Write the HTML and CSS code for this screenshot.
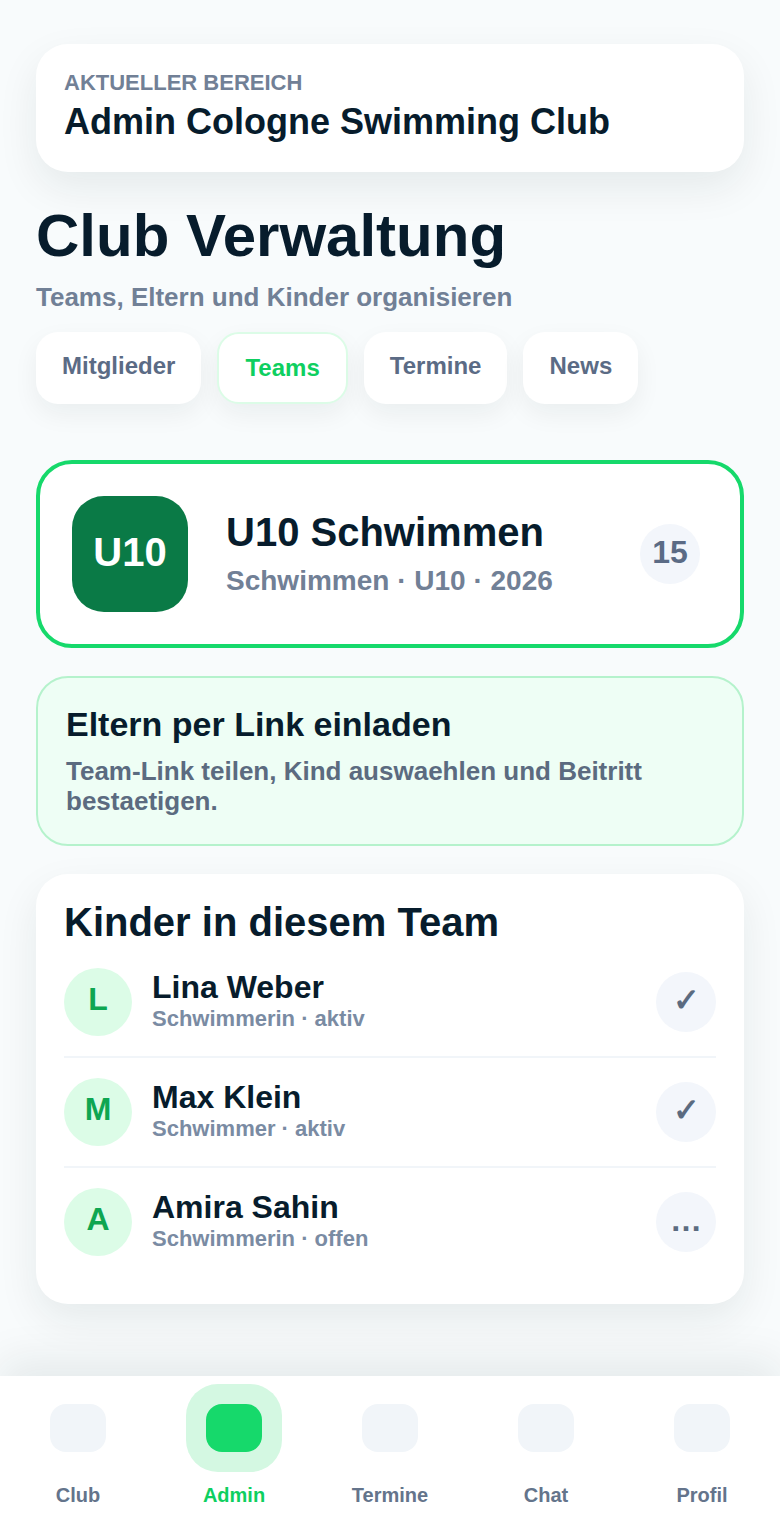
FILE: index.html
```html
<!DOCTYPE html>
<html lang="de">
<head>
    <meta charset="UTF-8">
    <meta name="viewport" content="width=device-width, initial-scale=1.0">
    <title>Club Verwaltung</title>
    <link rel="stylesheet" href="styles.css">
</head>
<body>
    <main class="content">
        <section class="area-card">
            <div class="area-label">AKTUELLER BEREICH</div>
            <div class="area-name">Admin Cologne Swimming Club</div>
        </section>

        <h1 class="page-title">Club Verwaltung</h1>
        <p class="page-sub">Teams, Eltern und Kinder organisieren</p>

        <div class="tabs">
            <a class="tab">Mitglieder</a>
            <a class="tab tab-active">Teams</a>
            <a class="tab">Termine</a>
            <a class="tab">News</a>
        </div>

        <section class="team-card">
            <div class="team-logo">U10</div>
            <div class="team-info">
                <div class="team-name">U10 Schwimmen</div>
                <div class="team-meta">Schwimmen · U10 · 2026</div>
            </div>
            <div class="team-count">15</div>
        </section>

        <section class="invite-card">
            <h2 class="invite-title">Eltern per Link einladen</h2>
            <p class="invite-text">Team-Link teilen, Kind auswaehlen und Beitritt bestaetigen.</p>
        </section>

        <section class="kids-card">
            <h2 class="kids-title">Kinder in diesem Team</h2>
            <div class="kid-row">
                <div class="kid-avatar">L</div>
                <div class="kid-info">
                    <div class="kid-name">Lina Weber</div>
                    <div class="kid-meta">Schwimmerin · aktiv</div>
                </div>
                <div class="kid-action">✓</div>
            </div>
            <div class="kid-row">
                <div class="kid-avatar">M</div>
                <div class="kid-info">
                    <div class="kid-name">Max Klein</div>
                    <div class="kid-meta">Schwimmer · aktiv</div>
                </div>
                <div class="kid-action">✓</div>
            </div>
            <div class="kid-row">
                <div class="kid-avatar">A</div>
                <div class="kid-info">
                    <div class="kid-name">Amira Sahin</div>
                    <div class="kid-meta">Schwimmerin · offen</div>
                </div>
                <div class="kid-action">…</div>
            </div>
        </section>
    </main>

    <nav class="bottom-nav">
        <a class="nav-item"><span class="nav-icon"><span class="nav-glyph"></span></span><span class="nav-label">Club</span></a>
        <a class="nav-item nav-active"><span class="nav-icon"><span class="nav-glyph"></span></span><span class="nav-label">Admin</span></a>
        <a class="nav-item"><span class="nav-icon"><span class="nav-glyph"></span></span><span class="nav-label">Termine</span></a>
        <a class="nav-item"><span class="nav-icon"><span class="nav-glyph"></span></span><span class="nav-label">Chat</span></a>
        <a class="nav-item"><span class="nav-icon"><span class="nav-glyph"></span></span><span class="nav-label">Profil</span></a>
    </nav>
</body>
</html>
```

FILE: styles.css
```css
* {
    box-sizing: border-box;
}

body {
    font-family: "Liberation Sans", Arial, sans-serif;
    font-weight: 700;
    background-color: #f8fbfc;
    color: #071c2c;
    margin: 0;
    height: 1520px;
    overflow: hidden;
    display: flex;
    flex-direction: column;
}

.content {
    flex: 1;
    padding: 44px 36px 0;
}

.area-card {
    background-color: #fff;
    border-radius: 32px;
    height: 128px;
    padding: 26px 28px;
    box-shadow: 0 16px 40px rgba(15, 35, 40, 0.08);
}

.area-label {
    font-size: 22px;
    line-height: 25px;
    color: #718096;
}

.area-name {
    font-size: 36px;
    line-height: 41px;
    margin-top: 6px;
}

.page-title {
    font-size: 60px;
    line-height: 71px;
    margin: 28px 0 0;
}

.page-sub {
    font-size: 26px;
    line-height: 30px;
    color: #718096;
    margin: 11px 0 0;
}

.tabs {
    display: flex;
    gap: 16px;
    margin-top: 20px;
}

.tab {
    font-size: 24px;
    line-height: 28px;
    padding: 20px 26.05px;
    background-color: #fff;
    color: #5b6b85;
    border-radius: 22px;
    box-shadow: 0 10px 26px rgba(15, 35, 40, 0.06);
}

.tab-active {
    border: 2px solid #dcfce7;
    color: #0ecf60;
}

.team-card {
    display: flex;
    align-items: center;
    gap: 38px;
    margin-top: 56px;
    padding: 32px 40px 32px 32px;
    background-color: #fff;
    border: 4px solid #16d96b;
    border-radius: 36px;
}

.team-logo {
    width: 116px;
    height: 116px;
    flex: none;
    display: flex;
    align-items: center;
    justify-content: center;
    padding-bottom: 4px;
    font-size: 40px;
    color: #fff;
    background-color: #0a7a46;
    border-radius: 32px;
}

.team-info {
    flex: 1;
    margin-top: -4px;
}

.team-name {
    font-size: 40px;
    line-height: 48px;
}

.team-meta {
    font-size: 28px;
    line-height: 33px;
    color: #718096;
    margin-top: 8px;
}

.team-count {
    width: 60px;
    height: 60px;
    flex: none;
    display: flex;
    align-items: center;
    justify-content: center;
    padding-bottom: 4px;
    font-size: 32px;
    color: #5b6b85;
    background-color: #f3f6fb;
    border-radius: 50%;
}

.invite-card {
    margin-top: 28px;
    padding: 27px 28px;
    height: 170px;
    background-color: #eefef5;
    border: 2px solid #b5f2cc;
    border-radius: 32px;
}

.invite-title {
    font-size: 34px;
    line-height: 39px;
    margin: 0;
}

.invite-text {
    font-size: 26px;
    line-height: 30px;
    color: #5b6b80;
    margin: 12px 0 0;
}

.kids-card {
    margin-top: 28px;
    padding: 28px;
    background-color: #fff;
    border-radius: 32px;
    box-shadow: 0 16px 40px rgba(15, 35, 40, 0.08);
}

.kids-title {
    font-size: 40px;
    line-height: 40px;
    margin: 0 0 6px;
}

.kid-row {
    display: flex;
    align-items: center;
    gap: 20px;
    padding: 20px 0;
    border-bottom: 2px solid #f1f5f9;
}

.kid-row:last-child {
    border-bottom: none;
}

.kid-avatar {
    width: 68px;
    height: 68px;
    flex: none;
    display: flex;
    align-items: center;
    justify-content: center;
    padding-bottom: 6px;
    font-size: 32px;
    color: #0ea651;
    background-color: #dcfce7;
    border-radius: 50%;
}

.kid-info {
    flex: 1;
    margin-top: -4px;
}

.kid-name {
    font-size: 32px;
    line-height: 37px;
}

.kid-meta {
    font-size: 22px;
    line-height: 25px;
    color: #7a8ba3;
}

.kid-action {
    width: 60px;
    height: 60px;
    flex: none;
    display: flex;
    align-items: center;
    justify-content: center;
    padding-bottom: 4px;
    font-size: 32px;
    color: #5b6b80;
    background-color: #f3f6fb;
    border-radius: 50%;
}

.bottom-nav {
    height: 144px;
    flex: none;
    display: grid;
    grid-template-columns: repeat(5, 1fr);
    padding-top: 8px;
    background-color: #fff;
    box-shadow: 0 -16px 40px rgba(15, 35, 40, 0.08);
}

.nav-item {
    display: flex;
    flex-direction: column;
    align-items: center;
    font-size: 20px;
    line-height: 23px;
    color: #64748b;
}

.nav-icon {
    width: 96px;
    height: 88px;
    display: flex;
    align-items: center;
    justify-content: center;
    border-radius: 32px;
}

.nav-glyph {
    width: 56px;
    height: 48px;
    background-color: #f1f5f9;
    border-radius: 16px;
}

.nav-label {
    margin-top: 12px;
}

.nav-active {
    color: #0ecf60;
}

.nav-active .nav-icon {
    background-color: #d4f8e2;
}

.nav-active .nav-glyph {
    background-color: #16d96b;
}
```
